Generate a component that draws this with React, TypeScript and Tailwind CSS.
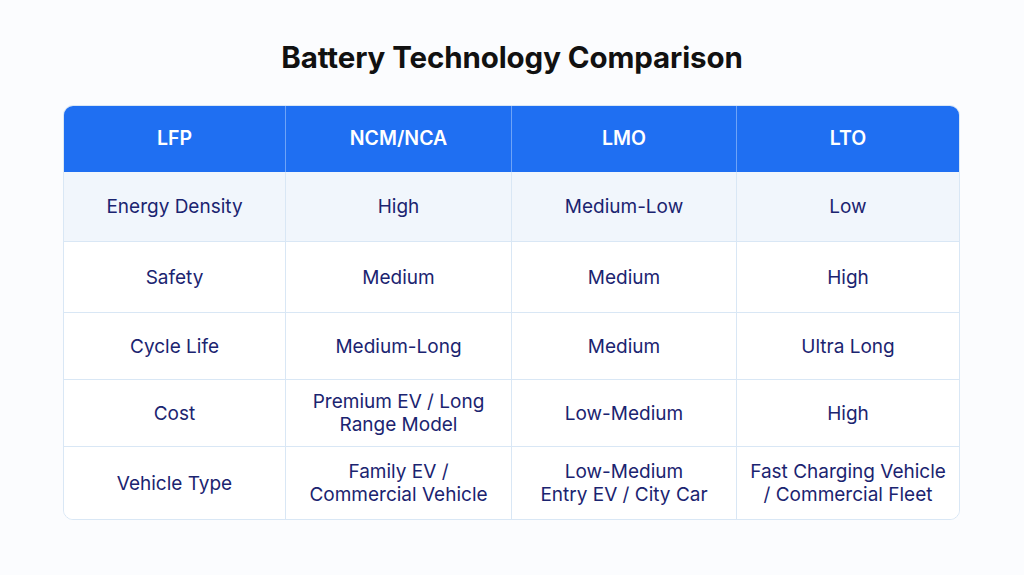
const HEAD = ['LFP', 'NCM/NCA', 'LMO', 'LTO']

const ROWS: { cells: string[][]; h: string; tint?: boolean }[] = [
  { cells: [['Energy Density'], ['High'], ['Medium-Low'], ['Low']], h: 'h-[69px]', tint: true },
  { cells: [['Safety'], ['Medium'], ['Medium'], ['High']], h: 'h-[71px]' },
  { cells: [['Cycle Life'], ['Medium-Long'], ['Medium'], ['Ultra Long']], h: 'h-[67px]' },
  { cells: [['Cost'], ['Premium EV / Long', 'Range Model'], ['Low-Medium'], ['High']], h: 'h-[67px]' },
  {
    cells: [
      ['Vehicle Type'],
      ['Family EV /', 'Commercial Vehicle'],
      ['Low-Medium', 'Entry EV / City Car'],
      ['Fast Charging Vehicle', '/ Commercial Fleet'],
    ],
    h: 'h-[73px]',
  },
]

export default function App() {
  return (
    <div className="w-[1024px] h-[575px] bg-[#fbfcfe] flex flex-col items-center font-['Inter',sans-serif]">
      <h1 className="mt-[37px] text-[29.5px] leading-[40px] font-bold text-[#111111] tracking-[-0.1px]">
        Battery Technology Comparison
      </h1>

      <div className="mt-[28px] ml-[-1px] w-[897px] rounded-[10px] border border-[#d9e7f5] bg-white overflow-hidden">
        {/* Header */}
        <div className="grid grid-cols-[221px_226px_225px_1fr] h-[66px] bg-[#1f6ff2]">
          {HEAD.map((h, i) => (
            <div
              key={h}
              className={`flex items-center justify-center text-white text-[19.5px] font-semibold ${i > 0 ? 'border-l border-[#6ea3f7]' : ''}`}
            >
              {h}
            </div>
          ))}
        </div>

        {/* Rows */}
        {ROWS.map((row, ri) => (
          <div
            key={ri}
            className={`grid grid-cols-[221px_226px_225px_1fr] ${row.h} ${ri > 0 ? 'border-t border-[#d9e7f5]' : ''} ${row.tint ? 'bg-[#f1f6fc]' : 'bg-white'}`}
          >
            {row.cells.map((lines, ci) => (
              <div
                key={ci}
                className={`flex flex-col items-center justify-center text-center text-[19px] leading-[23px] text-[#1b2470] ${ci > 0 ? 'border-l border-[#d9e7f5]' : ''}`}
              >
                {lines.map(l => (
                  <span key={l}>{l}</span>
                ))}
              </div>
            ))}
          </div>
        ))}
      </div>
    </div>
  )
}
